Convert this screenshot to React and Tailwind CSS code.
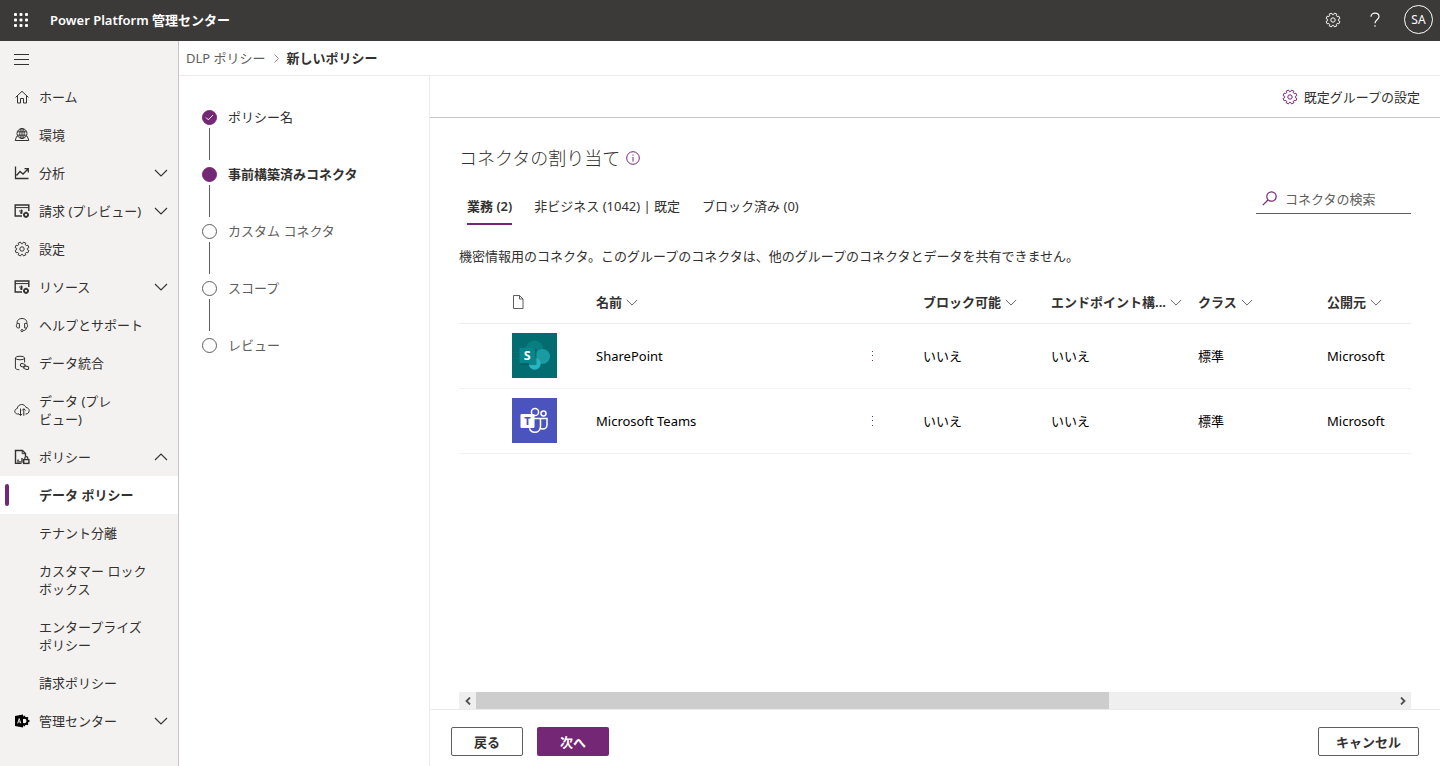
import React, { useState } from 'react';
import clsx from 'clsx';

const navItems = [
  { label: 'ホーム', icon: 'home' },
  { label: '環境', icon: 'globe' },
  { label: '分析', icon: 'chart', chevron: 'down' },
  { label: '請求 (プレビュー)', icon: 'panel', chevron: 'down' },
  { label: '設定', icon: 'gear' },
  { label: 'リソース', icon: 'panel', chevron: 'down' },
  { label: 'ヘルプとサポート', icon: 'headset' },
  { label: 'データ統合', icon: 'database' },
  { label: ['データ (プレ', 'ビュー)'], icon: 'cloud' },
  { label: 'ポリシー', icon: 'policy', chevron: 'up' },
  { label: 'データ ポリシー', active: true },
  { label: 'テナント分離' },
  { label: ['カスタマー ロック', 'ボックス'] },
  { label: ['エンタープライズ', 'ポリシー'] },
  { label: '請求ポリシー' },
  { label: '管理センター', icon: 'admin', chevron: 'down' },
];

const steps = [
  { label: 'ポリシー名', state: 'done' },
  { label: '事前構築済みコネクタ', state: 'current' },
  { label: 'カスタム コネクタ', state: 'todo' },
  { label: 'スコープ', state: 'todo' },
  { label: 'レビュー', state: 'todo' },
];

const tabs = ['業務 (2)', '非ビジネス (1042) | 既定', 'ブロック済み (0)'];

const connectors = [
  { name: 'SharePoint', Logo: SharePointLogo },
  { name: 'Microsoft Teams', Logo: TeamsLogo },
];

// outline of an eight-toothed cog on a 16x16 grid
const gearPath = (() => {
  const points = [];
  for (let i = 0; i < 8; i++) {
    const mid = (i * Math.PI) / 4 + Math.PI / 8;
    [[-0.27, 5.4], [-0.19, 7], [0.19, 7], [0.27, 5.4]].forEach(([offset, r]) => {
      const x = 8 + r * Math.cos(mid + offset);
      const y = 8 + r * Math.sin(mid + offset);
      points.push(`${x.toFixed(2)} ${y.toFixed(2)}`);
    });
  }
  return `M${points.join('L')}Z`;
})();

function GearIcon({ className }) {
  return (
    <svg viewBox="0 0 16 16" className={className} fill="none" stroke="currentColor" strokeLinejoin="round">
      <path d={gearPath} />
      <circle cx="8" cy="8" r="2.2" />
    </svg>
  );
}

function Chevron({ className, up }) {
  return (
    <svg viewBox="0 0 14 8" className={className} fill="none" stroke="currentColor" strokeWidth="1.1">
      <path d={up ? 'M1 7l6-6 6 6' : 'M1 1l6 6 6-6'} />
    </svg>
  );
}

function NavIcon({ name }) {
  if (name === 'gear') return <GearIcon className="h-4 w-4" />;
  return (
    <svg viewBox="0 0 16 16" className="h-4 w-4" fill="none" stroke="currentColor">
      {name === 'home' && <path d="M1.6 8.4L8 2.3l6.4 6.1M3.5 7v7h3V9.5h3V14h3V7" />}
      {name === 'globe' && (
        <>
          <circle cx="8" cy="6.5" r="5" />
          <ellipse cx="8" cy="6.5" rx="2.2" ry="5" />
          <path d="M3.4 4.8h9.2M3.4 8.2h9.2M8 1.5v10M3.5 9.5H2.6L1.2 13.5h13.6l-1.4-4h-.9" />
        </>
      )}
      {name === 'chart' && (
        <path d="M1.5 1.5v12h13M2.5 10.5l3.5-4 3 2.5L14 4M10.5 3.6H14.3V7.4" strokeWidth="1.3" />
      )}
      {name === 'panel' && (
        <>
          <path d="M8 13H1.2V2h13.6v6" strokeWidth="1.4" />
          <path d="M1 4.6h14" />
          <path d="M5 8h4M6 9.8h2.5M7.5 6.6v4.4" strokeWidth="1.2" />
          <circle cx="12" cy="11.8" r="2" strokeWidth="1.7" />
          <path d="M12 8.8v1M12 13.8v1M9 11.8h1M14 11.8h1" strokeWidth="1.2" />
        </>
      )}
      {name === 'headset' && (
        <>
          <path d="M3.2 7C2.6 3.6 4.6 1.5 8 1.5s5.400 2.100 4.800 5.500" />
          <path d="M5.400 6.500c-1.800-.5-3 .3-3 2.200s1.200 2.700 3 2.200zM10.600 6.500c1.800-.5 3 .3 3 2.200s-1.200 2.700-3 2.200z" />
          <path d="M12.400 10.900c0 1.700-1.100 2.600-3.200 2.600" />
          <circle cx="8" cy="13.6" r="1.1" />
        </>
      )}
      {name === 'database' && (
        <>
          <ellipse cx="6" cy="3" rx="4.6" ry="1.8" />
          <path d="M1.4 3v10c0 .9 1.6 1.6 3.9 1.8M10.6 3v4.5" />
          <rect x="6.3" y="8.8" width="5" height="3" rx="1.5" transform="rotate(15 8.8 10.3)" />
          <rect x="9.6" y="11.2" width="5.2" height="3" rx="1.5" transform="rotate(15 12.2 12.7)" />
        </>
      )}
      {name === 'cloud' && (
        <>
          <path d="M5 12H3.6C2 12 .8 10.8.8 9.3c0-1.4 1-2.5 2.4-2.7C3.5 4.2 5.4 2.5 7.7 2.5c2 0 3.6 1.2 4.3 3 1.8.1 3.2 1.5 3.2 3.2 0 1.8-1.4 3.3-3.2 3.3h-.6" />
          <path d="M6.5 6.5v7M4.7 11.8l1.8 1.8 1.8-1.8M9.8 13.8v-7M8 8.5l1.8-1.8 1.8 1.8" />
        </>
      )}
      {name === 'policy' && (
        <>
          <path d="M7.5 14.4H1.5V1.5h7l3 3v3" strokeWidth="1.4" />
          <path d="M8.2 1.5v3.2h3.2" />
          <path d="M4 13.8v-3.3M6 13.8V12M8 13.8V9" strokeWidth="1.4" />
          <path d="M10.8 10.5V9.2c0-2 3-2 3 0v1.3" strokeWidth="1.2" />
          <rect x="9.7" y="10.6" width="5.2" height="3.8" strokeWidth="1.4" />
        </>
      )}
      {name === 'admin' && (
        <>
          <path d="M1 3l8-1.6v13.2L1 13z" fill="#000" stroke="none" />
          <circle cx="10.2" cy="8" r="3.3" stroke="#000" strokeWidth="2" />
          <path d="M10.2 2.8v2M10.2 11.2v2M13.4 8h2M12.5 5.7l1.4-1.4M12.5 10.3l1.4 1.4" stroke="#000" strokeWidth="1.8" />
          <path d="M3.6 10.4L5.2 5.6l1.6 4.8M4.2 9h2" stroke="#f3f2f1" strokeWidth=".9" />
        </>
      )}
    </svg>
  );
}

function SharePointLogo() {
  return (
    <svg viewBox="0 0 45 45" className="block h-[45px] w-[45px]" role="img" aria-label="SharePoint">
      <rect width="45" height="45" fill="#036c70" />
      <circle cx="22.5" cy="16.5" r="9" fill="#0a7d81" />
      <circle cx="30.5" cy="23.5" r="7.5" fill="#1a9ba1" />
      <circle cx="22.7" cy="30.8" r="6" fill="#28b5c3" />
      <rect x="8.5" y="15.5" width="16" height="16.5" rx="1" fill="#02494c" opacity=".5" />
      <rect x="7.5" y="14.8" width="15.5" height="15.5" rx="1" fill="#03878b" />
      <text x="15.2" y="27.3" textAnchor="middle" fill="#fff" fontSize="12.5" fontWeight="700" fontFamily="Noto Sans, sans-serif">S</text>
    </svg>
  );
}

function TeamsLogo() {
  return (
    <svg viewBox="0 0 45 45" className="block h-[45px] w-[45px]" role="img" aria-label="Microsoft Teams">
      <rect width="45" height="45" fill="#4b53bc" />
      <g fill="none" stroke="#fff" strokeWidth="1.5">
        <circle cx="23" cy="14" r="3.6" />
        <circle cx="31.5" cy="15.5" r="2.5" />
        <path d="M22 20.5h6.5v7.5c0 4-2.6 6.3-5.7 6.3-2.6 0-4.6-1.5-5.3-4M28.5 20.5H35v6.2c0 2.7-2 4.3-4.2 4.3-1 0-1.9-.3-2.6-.9" />
      </g>
      <rect x="8.5" y="16" width="14" height="14" rx="1" fill="#fff" />
      <text x="15.5" y="27.2" textAnchor="middle" fill="#4b53bc" fontSize="11" fontWeight="700" fontFamily="Noto Sans, sans-serif">T</text>
    </svg>
  );
}

function Header() {
  return (
    <header className="flex h-[41px] items-center bg-[#3b3a39] pr-[7px] pb-0.5 text-white">
      <button className="flex h-full w-[42px] items-center justify-center" aria-label="アプリ起動ツール">
        <svg viewBox="0 0 14 14" className="h-3.5 w-3.5" fill="currentColor">
          {[0, 5.5, 11].map((y) =>
            [0, 5.5, 11].map((x) => <rect key={`${x}-${y}`} x={x} y={y} width="3" height="3" rx="1" />)
          )}
        </svg>
      </button>
      <h1 className="flex-1 pl-2 font-semibold">Power Platform 管理センター</h1>
      <div className="flex items-center">
        <button className="flex w-[42px] justify-center" aria-label="設定">
          <GearIcon className="h-4 w-4" />
        </button>
        <button className="flex w-[42px] justify-center" aria-label="ヘルプ">
          <svg viewBox="0 0 12 16" className="h-4 w-3" fill="none" stroke="currentColor" strokeWidth="1.2">
            <path d="M2 4.8C2 2.5 3.7 1.2 6 1.2s4 1.3 4 3.4C10 7.6 6 7.8 6 11.2" />
            <path d="M6 13.2V14.8" />
          </svg>
        </button>
        <button className="ml-2 flex h-[29px] w-[29px] items-center justify-center rounded-full border border-white text-[12px]">
          SA
        </button>
      </div>
    </header>
  );
}

function Sidebar() {
  return (
    <nav className="w-[179px] shrink-0 border-r border-[#c8c6c4] bg-[#f3f2f1] pb-4">
      <button className="flex h-[37px] items-center pl-3.5" aria-label="ナビゲーション">
        <svg viewBox="0 0 15 11" className="h-[11px] w-[15px]" stroke="currentColor">
          <path d="M0 .5h15M0 5.5h15M0 10.5h15" />
        </svg>
      </button>
      <ul>
        {navItems.map((item) => (
          <li key={item.label} className={clsx('flex', item.active && 'bg-white')}>
            <a
              href="#"
              aria-current={item.active ? 'page' : undefined}
              className={clsx(
                'flex flex-1 items-center py-2.5 pr-2.5 leading-[18px]',
                !Array.isArray(item.label) && 'h-[38px]',
                item.active && 'font-bold'
              )}
            >
              <span className="flex w-[39px] shrink-0 items-center pl-[5px]">
                {item.active && <span className="h-[22px] w-1 rounded-sm bg-[#742774]" />}
                {item.icon && (
                  <span className="pl-[9px]">
                    <NavIcon name={item.icon} />
                  </span>
                )}
              </span>
              <span className="flex-1 whitespace-nowrap">
                {[].concat(item.label).map((line) => (
                  <span key={line} className="block">{line}</span>
                ))}
              </span>
              {item.chevron && <Chevron className="h-2 w-3.5 shrink-0" up={item.chevron === 'up'} />}
            </a>
          </li>
        ))}
      </ul>
    </nav>
  );
}

function Stepper() {
  return (
    <aside className="w-[251px] shrink-0 border-r border-[#edebe9] pt-[34px] pl-[23px]">
      <ol>
        {steps.map((step, i) => (
          <li key={step.label} className="flex gap-[11px]">
            <div className="flex w-[15px] flex-col items-center">
              <span
                className={clsx(
                  'flex h-[15px] w-[15px] items-center justify-center rounded-full border',
                  step.state === 'todo' ? 'border-[#605e5c]' : 'border-[#742774] bg-[#742774]'
                )}
              >
                {step.state === 'done' && (
                  <svg viewBox="0 0 9 7" className="h-[7px] w-[9px]" fill="none" stroke="#fff">
                    <path d="M1 3.5l2.3 2.3L8 1" />
                  </svg>
                )}
              </span>
              {i < steps.length - 1 && <span className="mt-[3px] mb-[7px] h-8 w-px bg-[#605e5c]" />}
            </div>
            <span
              className={clsx(
                'h-[15px] leading-[15px]',
                step.state === 'current' && 'font-bold',
                step.state === 'todo' && 'text-[#605e5c]'
              )}
            >
              {step.label}
            </span>
          </li>
        ))}
      </ol>
    </aside>
  );
}

function ColumnHeader({ children }) {
  return (
    <th scope="col" className="text-left font-bold">
      <button className="flex items-center gap-1 whitespace-nowrap">
        {children}
        <Chevron className="h-[7px] w-3 shrink-0 text-[#605e5c]" />
      </button>
    </th>
  );
}

function ConnectorTable() {
  return (
    <table className="mt-4 w-full table-fixed">
      <colgroup>
        <col className="w-[53px]" />
        <col className="w-[84px]" />
        <col />
        <col className="w-[59px]" />
        <col className="w-32" />
        <col className="w-[147px]" />
        <col className="w-[129px]" />
        <col className="w-[84px]" />
      </colgroup>
      <thead>
        <tr className="h-[41px] border-b border-[#edebe9]">
          <th />
          <th scope="col" aria-label="アイコン">
            <svg viewBox="0 0 12 14" className="h-3.5 w-3" fill="none" stroke="#605e5c">
              <path d="M1.5.5h6l3.5 3.5v9.5H1.5zM7.5.5v3.5h3.5" />
            </svg>
          </th>
          <ColumnHeader>名前</ColumnHeader>
          <th />
          <ColumnHeader>ブロック可能</ColumnHeader>
          <ColumnHeader>エンドポイント構...</ColumnHeader>
          <ColumnHeader>クラス</ColumnHeader>
          <ColumnHeader>公開元</ColumnHeader>
        </tr>
      </thead>
      <tbody className="text-black">
        {connectors.map(({ name, Logo }) => (
          <tr key={name} className="h-[65px] border-b border-[#f3f2f1]">
            <td />
            <td><Logo /></td>
            <td>{name}</td>
            <td>
              <button className="flex w-[18px] justify-center" aria-label={`${name} のその他の操作`}>
                <svg viewBox="0 0 2 10" className="h-2.5 w-0.5" fill="#742774">
                  <path d="M0 0h1v1H0zM0 4h1v1H0zM0 9h1v1H0z" />
                </svg>
              </button>
            </td>
            <td>いいえ</td>
            <td>いいえ</td>
            <td>標準</td>
            <td>Microsoft</td>
          </tr>
        ))}
      </tbody>
    </table>
  );
}

function ScrollBar() {
  return (
    <div className="flex h-[17px] bg-[#efefef] text-[#505050]">
      <button className="flex w-[17px] items-center justify-center" aria-label="左へスクロール">
        <svg viewBox="0 0 6 8" className="h-2 w-1.5" fill="none" stroke="currentColor" strokeWidth="1.8">
          <path d="M5 .5L1.5 4 5 7.5" />
        </svg>
      </button>
      <div className="flex-1">
        <div className="h-full w-[69%] bg-[#cdcdcd]" />
      </div>
      <button className="flex w-[17px] items-center justify-center" aria-label="右へスクロール">
        <svg viewBox="0 0 6 8" className="h-2 w-1.5" fill="none" stroke="currentColor" strokeWidth="1.8">
          <path d="M1 .5L4.5 4 1 7.5" />
        </svg>
      </button>
    </div>
  );
}

function App() {
  const [activeTab, setActiveTab] = useState(0);

  return (
    <div className="flex min-h-screen flex-col bg-white font-['Noto_Sans','Noto_Sans_CJK_JP',sans-serif] text-[13px] leading-5 text-[#323130]">
      <Header />
      <div className="flex flex-1">
        <Sidebar />

        <div className="flex min-w-0 flex-1 flex-col">
          {/* Breadcrumb */}
          <div className="flex h-[35px] items-center gap-2 border-b border-[#edebe9] pl-[7px]">
            <a href="#" className="text-[#605e5c]">DLP ポリシー</a>
            <svg viewBox="0 0 5 9" className="h-[9px] w-[5px]" fill="none" stroke="#8a8886">
              <path d="M.5.5l4 4-4 4" />
            </svg>
            <span className="font-bold">新しいポリシー</span>
          </div>

          <div className="flex flex-1">
            <Stepper />

            <main className="flex min-w-0 flex-1 flex-col">
              <div className="flex h-[42px] items-center justify-end border-b border-[#c8c6c4] pr-5">
                <button className="flex items-center gap-1.5">
                  <GearIcon className="h-4 w-4 text-[#742774]" />
                  既定グループの設定
                </button>
              </div>

              <div className="flex flex-1 flex-col pt-7 pr-[29px] pl-[29px]">
                <div className="flex items-center gap-1.5">
                  <h2 className="text-[18px] leading-6 font-light">コネクタの割り当て</h2>
                  <button aria-label="情報">
                    <svg viewBox="0 0 14 14" className="block h-3.5 w-3.5" fill="none" stroke="#742774">
                      <circle cx="7" cy="7" r="6.3" />
                      <path d="M7 6v4.5M7 3.5v1.2" />
                    </svg>
                  </button>
                </div>

                <div className="mt-3 flex h-12 items-center justify-between">
                  <div role="tablist" className="flex gap-1.5">
                    {tabs.map((tab, i) => (
                      <button
                        key={tab}
                        role="tab"
                        aria-selected={i === activeTab}
                        onClick={() => setActiveTab(i)}
                        className="flex h-[38px] px-2"
                      >
                        <span
                          className={clsx(
                            'flex h-full items-center border-y-2 border-t-transparent',
                            i === activeTab ? 'border-b-[#742774] font-semibold' : 'border-b-transparent'
                          )}
                        >
                          {tab}
                        </span>
                      </button>
                    ))}
                  </div>
                  <label className="flex h-8 w-[155px] items-center gap-2 self-start border-b border-[#605e5c] pt-0.5 pl-1.5">
                    <svg viewBox="0 0 15 15" className="h-[15px] w-[15px] shrink-0" fill="none" stroke="#742774" strokeWidth="1.2">
                      <circle cx="9.5" cy="5.5" r="4.7" />
                      <path d="M6 9L.8 14.2" />
                    </svg>
                    <input
                      type="text"
                      aria-label="コネクタの検索"
                      placeholder="コネクタの検索"
                      className="w-full min-w-0 outline-none placeholder:text-[#605e5c]"
                    />
                  </label>
                </div>

                <p className="mt-4">
                  機密情報用のコネクタ。このグループのコネクタは、他のグループのコネクタとデータを共有できません。
                </p>

                <ConnectorTable />
                <div className="flex-1" />
                <ScrollBar />
              </div>

              {/* Footer buttons */}
              <footer className="flex h-[57px] items-start gap-3.5 border-t border-[#edebe9] pt-[17px] pr-[21px] pl-[21px] font-semibold">
                <button className="h-[29px] w-[72px] rounded-xs border border-[#605e5c]">戻る</button>
                <button className="h-[29px] w-[72px] rounded-xs bg-[#742774] text-white">次へ</button>
                <button className="ml-auto h-[29px] w-[101px] rounded-xs border border-[#605e5c]">キャンセル</button>
              </footer>
            </main>
          </div>
        </div>
      </div>
    </div>
  );
}

export default App;
